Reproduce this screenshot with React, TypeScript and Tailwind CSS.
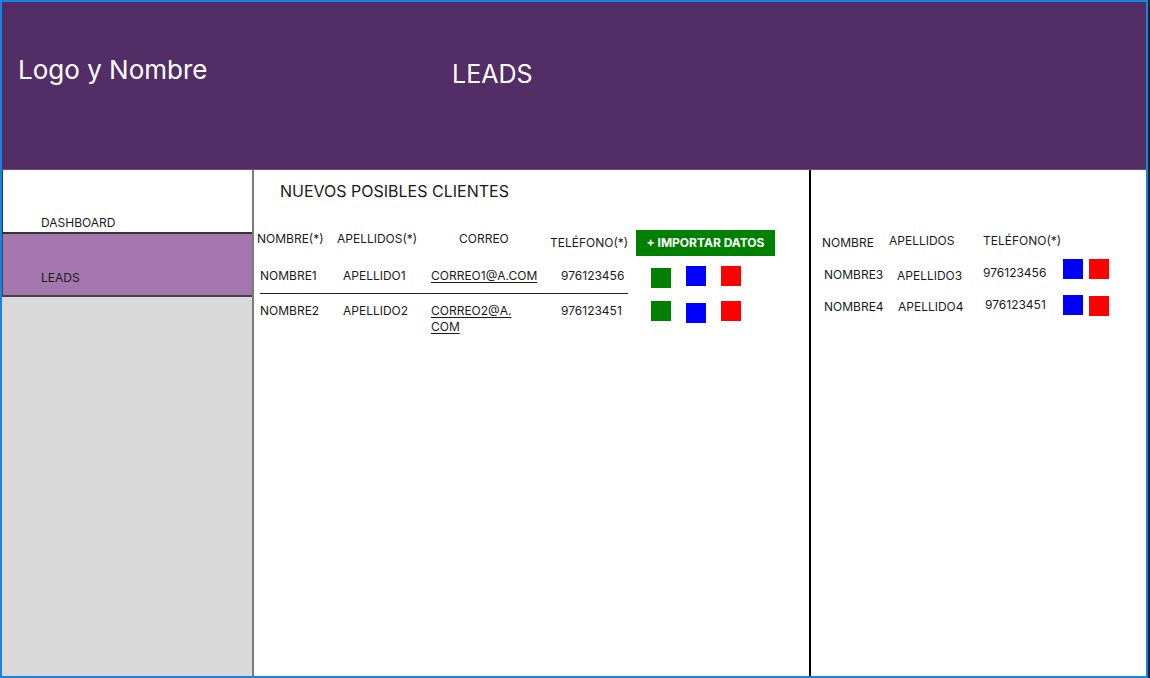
import React from "react";

const Sq = ({ c, mt = "" }: { c: string; mt?: string }) => (
  <div className={`w-[20px] h-[20px] ${c} ${mt}`} />
);

export default function App() {
  return (
    <div
      className="w-[1150px] h-[678px] border-r-2 border-[#222222] bg-white overflow-hidden text-[#1a1a1a]"
      style={{ fontFamily: "Inter, 'Noto Sans', sans-serif" }}
    >
      <div className="w-[1148px] h-[678px] border-2 border-[#1a82e2] flex flex-col">
        {/* Header */}
        <div className="h-[168px] shrink-0 bg-[#522d66] border-b border-[#6f4c84] flex items-start text-white">
          <div className="w-[450px] pl-[16px] pt-[51px] text-[26px] leading-[34px]">Logo y Nombre</div>
          <div className="pt-[55px] text-[25px] leading-[34px]">LEADS</div>
        </div>

        {/* Body */}
        <div className="flex flex-1 min-h-0">
          {/* Sidebar */}
          <div className="w-[252px] shrink-0 bg-[#d9d9d9] border-r-2 border-[#7a7a7a] flex flex-col">
            <div className="h-[64px] bg-white border-b-2 border-l border-[#333333] flex items-end pb-0 pl-[38px] text-[12px]">
              DASHBOARD
            </div>
            <div className="h-[63px] bg-[#a478ae] border-b-2 border-l border-[#444444] flex items-end pb-[8px] pl-[38px] text-[12px]">
              LEADS
            </div>
          </div>

          {/* Main */}
          <div className="w-[557px] shrink-0 border-r-2 border-black flex flex-col">
            <div className="pl-[26px] pt-[11px] text-[16px] leading-[20px]">NUEVOS POSIBLES CLIENTES</div>

            <div className="flex items-start mt-[28px] pl-[3px] text-[12px] leading-[16px]">
              <div className="w-[80px] mt-[2px]">NOMBRE(*)</div>
              <div className="w-[122px] mt-[2px]">APELLIDOS(*)</div>
              <div className="w-[91px] mt-[2px]">CORREO</div>
              <div className="w-[86px] mt-[6px]">TELÉFONO(*)</div>
              <div className="w-[139px] h-[26px] mt-[1px] bg-[#008000] text-white font-bold flex items-center justify-center text-[12px]">
                + IMPORTAR DATOS
              </div>
            </div>

            <div className="flex items-start mt-[10px] pl-[6px] text-[12px] leading-[16px]">
              <div className="w-[83px] mt-[2px]">NOMBRE1</div>
              <div className="w-[88px] mt-[2px]">APELLIDO1</div>
              <div className="w-[130px] mt-[2px] underline underline-offset-2">CORREO1@A.COM</div>
              <div className="w-[90px] mt-[2px]">976123456</div>
              <div className="flex gap-[15px]">
                <Sq c="bg-[#008000]" mt="mt-[2px]" />
                <Sq c="bg-[#0000ff]" />
                <Sq c="bg-[#ff0000]" />
              </div>
            </div>

            <div className="ml-[6px] w-[368px] h-[1px] bg-[#222222] mt-[5px]" />

            <div className="flex items-start mt-[7px] pl-[6px] text-[12px] leading-[16px]">
              <div className="w-[83px] mt-[2px]">NOMBRE2</div>
              <div className="w-[88px] mt-[2px]">APELLIDO2</div>
              <div className="w-[130px] mt-[2px] underline underline-offset-2">
                CORREO2@A.
                <br />
                COM
              </div>
              <div className="w-[90px] mt-[2px]">976123451</div>
              <div className="flex gap-[15px]">
                <Sq c="bg-[#008000]" />
                <Sq c="bg-[#0000ff]" mt="mt-[2px]" />
                <Sq c="bg-[#ff0000]" />
              </div>
            </div>
          </div>

          {/* Right panel */}
          <div className="flex-1 flex flex-col text-[12px] leading-[16px]">
            <div className="flex items-start mt-[64px] pl-[11px]">
              <div className="w-[67px] mt-[1px]">NOMBRE</div>
              <div className="w-[94px] mt-[-1px]">APELLIDOS</div>
              <div className="mt-[-1px]">TELÉFONO(*)</div>
            </div>
            <div className="flex items-start mt-[1px] pl-[13px]">
              <div className="w-[73px] mt-[15px]">NOMBRE3</div>
              <div className="w-[86px] mt-[16px]">APELLIDO3</div>
              <div className="w-[80px] mt-[13px]">976123456</div>
              <div className="flex gap-[6px] mt-[7px]">
                <Sq c="bg-[#0000ff]" />
                <Sq c="bg-[#ff0000]" />
              </div>
            </div>
            <div className="flex items-start mt-[11px] pl-[13px]">
              <div className="w-[74px] mt-[4px]">NOMBRE4</div>
              <div className="w-[87px] mt-[4px]">APELLIDO4</div>
              <div className="w-[78px] mt-[2px]">976123451</div>
              <div className="flex gap-[6px]">
                <Sq c="bg-[#0000ff]" />
                <Sq c="bg-[#ff0000]" mt="mt-[1px]" />
              </div>
            </div>
          </div>
        </div>
      </div>
    </div>
  );
}
